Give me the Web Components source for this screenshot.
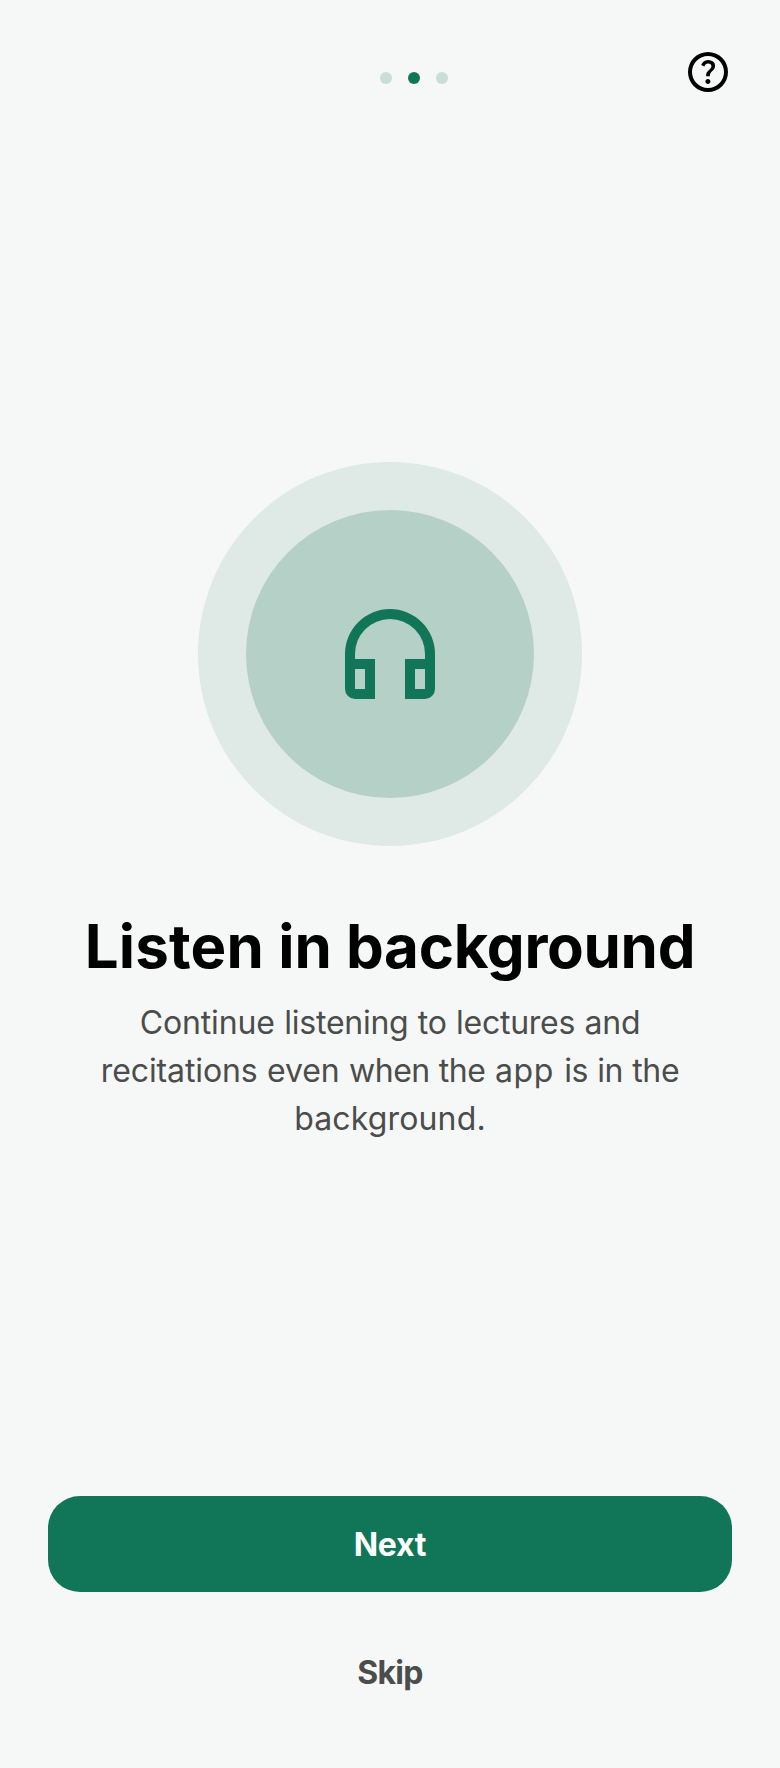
<!DOCTYPE html>
<html lang="en">
<head>
<meta charset="utf-8">
<title>Onboarding</title>
<style>
html, body { margin: 0; height: 100%; background: #f6f8f7; }
body { font-family: Inter, "Liberation Sans", sans-serif; }
</style>
</head>
<body>
<onboarding-screen>
  <step-dots slot="progress" count="3" active="1"></step-dots>
  <help-button slot="help"></help-button>
  <hero-badge slot="hero"></hero-badge>
  <onboarding-copy slot="copy">
    <span slot="title"><tracked-text by=".15">Listen</tracked-text> in <tracked-text by="-.3">background</tracked-text></span>
    <tracked-text by="-.15">Continue</tracked-text> <tracked-text by="-.25">listening to lectures and</tracked-text><br>
    <tracked-text by="-.12">recitations even</tracked-text> <tracked-text by="-.5">when the</tracked-text> <tracked-text by=".6">app </tracked-text><tracked-text by="-.4">is in the</tracked-text><br>
    <tracked-text by=".15">background.</tracked-text>
  </onboarding-copy>
  <action-button slot="actions" variant="filled"><tracked-text by="-.2">Next</tracked-text></action-button>
  <action-button slot="actions" variant="text"><tracked-text by="-.7">Skip</tracked-text></action-button>
</onboarding-screen>
<script>
class BaseElement extends HTMLElement {
  constructor() {
    super();
    this.attachShadow({ mode: "open" }).innerHTML = this.constructor.markup;
  }
}

customElements.define("onboarding-screen", class extends BaseElement {
  static markup = `
    <style>
      :host { display: flex; flex-direction: column; box-sizing: border-box; width: 100%; height: 1768px; padding: 48px; background: #f6f8f7; }
      header { display: grid; grid-template-columns: 1fr 48px; align-items: start; height: 48px; }
      .progress { padding: 24px 0 0 96px; display: flex; justify-content: center; }
      main { flex: none; display: flex; flex-direction: column; align-items: center; padding-top: 366px; }
      footer { margin-top: auto; display: flex; flex-direction: column; gap: 32px; }
    </style>
    <header>
      <div class="progress"><slot name="progress"></slot></div>
      <slot name="help"></slot>
    </header>
    <main><slot name="hero"></slot><slot name="copy"></slot></main>
    <footer><slot name="actions"></slot></footer>`;
});

customElements.define("step-dots", class extends BaseElement {
  static markup = `
    <style>
      :host { display: flex; gap: 16px; }
      i { width: 12px; height: 12px; border-radius: 50%; background: #c8ded6; }
      i.on { background: #117657; }
    </style>`;
  connectedCallback() {
    const active = Number(this.getAttribute("active"));
    for (let n = 0; n < Number(this.getAttribute("count")); n++) {
      const dot = document.createElement("i");
      if (n === active) dot.className = "on";
      this.shadowRoot.append(dot);
    }
  }
});

customElements.define("help-button", class extends BaseElement {
  static markup = `
    <style>
      :host { display: block; width: 48px; height: 48px; color: #000; }
      svg { display: block; fill: currentColor; }
    </style>
    <svg width="48" height="48" viewBox="0 -960 960 960" role="img" aria-label="Help"><path d="M478-240q21 0 35.5-14.5T528-290q0-21-14.5-35.5T478-340q-21 0-35.5 14.5T428-290q0 21 14.5 35.5T478-240Zm-36-154h74q0-33 7.5-52t42.5-52q26-26 41-49.5t15-56.5q0-56-41-86t-97-30q-57 0-92.5 30T342-618l66 26q5-18 22.5-39t53.5-21q32 0 48 17.5t16 38.5q0 20-12 37.5T506-526q-44 39-54 59t-10 73Zm38 314a400 400 0 1 1 0-800a400 400 0 0 1 0 800Zm0-80a320 320 0 1 0 0-640a320 320 0 0 0 0 640Z"/></svg>`;
});

customElements.define("hero-badge", class extends BaseElement {
  static markup = `
    <style>
      :host, div { display: grid; place-items: center; border-radius: 50%; }
      :host { width: 384px; height: 384px; background: #dfe9e5; }
      div { width: 288px; height: 288px; background: #b5d1c7; }
      svg { display: block; fill: #117657; }
    </style>
    <div><svg width="120" height="120" viewBox="0 0 24 24" role="img" aria-label="Headphones"><path fill-rule="evenodd" d="M3 12a9 9 0 0 1 18 0v7a2 2 0 0 1-2 2h-4v-8h4v-1a7 7 0 0 0-14 0v1h4v8H5a2 2 0 0 1-2-2zM5 15v4h2v-4zM17 15v4h2v-4z"/></svg></div>`;
});

/* Inline text with its own letter-spacing, in pixels. */
customElements.define("tracked-text", class extends BaseElement {
  static markup = `<style>:host { display: inline; }</style><slot></slot>`;
  connectedCallback() {
    this.style.letterSpacing = this.getAttribute("by") + "px";
  }
});

customElements.define("onboarding-copy", class extends BaseElement {
  static markup = `
    <style>
      :host { display: block; text-align: center; white-space: nowrap; }
      h1 { margin: 64px 0 0; font-size: 60px; line-height: 72px; font-weight: 700; color: #000; }
      p { margin: 17px 0 0; font-size: 32px; line-height: 48px; font-weight: 400; color: #4b4d4c; word-spacing: .6px; }
    </style>
    <h1><slot name="title"></slot></h1>
    <p><slot></slot></p>`;
});

customElements.define("action-button", class extends BaseElement {
  static markup = `
    <style>
      :host { display: block; }
      button { display: block; box-sizing: border-box; width: 100%; height: 96px; margin: 0; padding: 2px 0 0; border: 0; border-radius: 32px; background: none; font: 700 32px/48px Inter, "Liberation Sans", sans-serif; color: #4b4d4c; }
      :host([variant="filled"]) button { background: #117657; color: #fff; }
    </style>
    <button type="button"><slot></slot></button>`;
});
</script>
</body>
</html>
